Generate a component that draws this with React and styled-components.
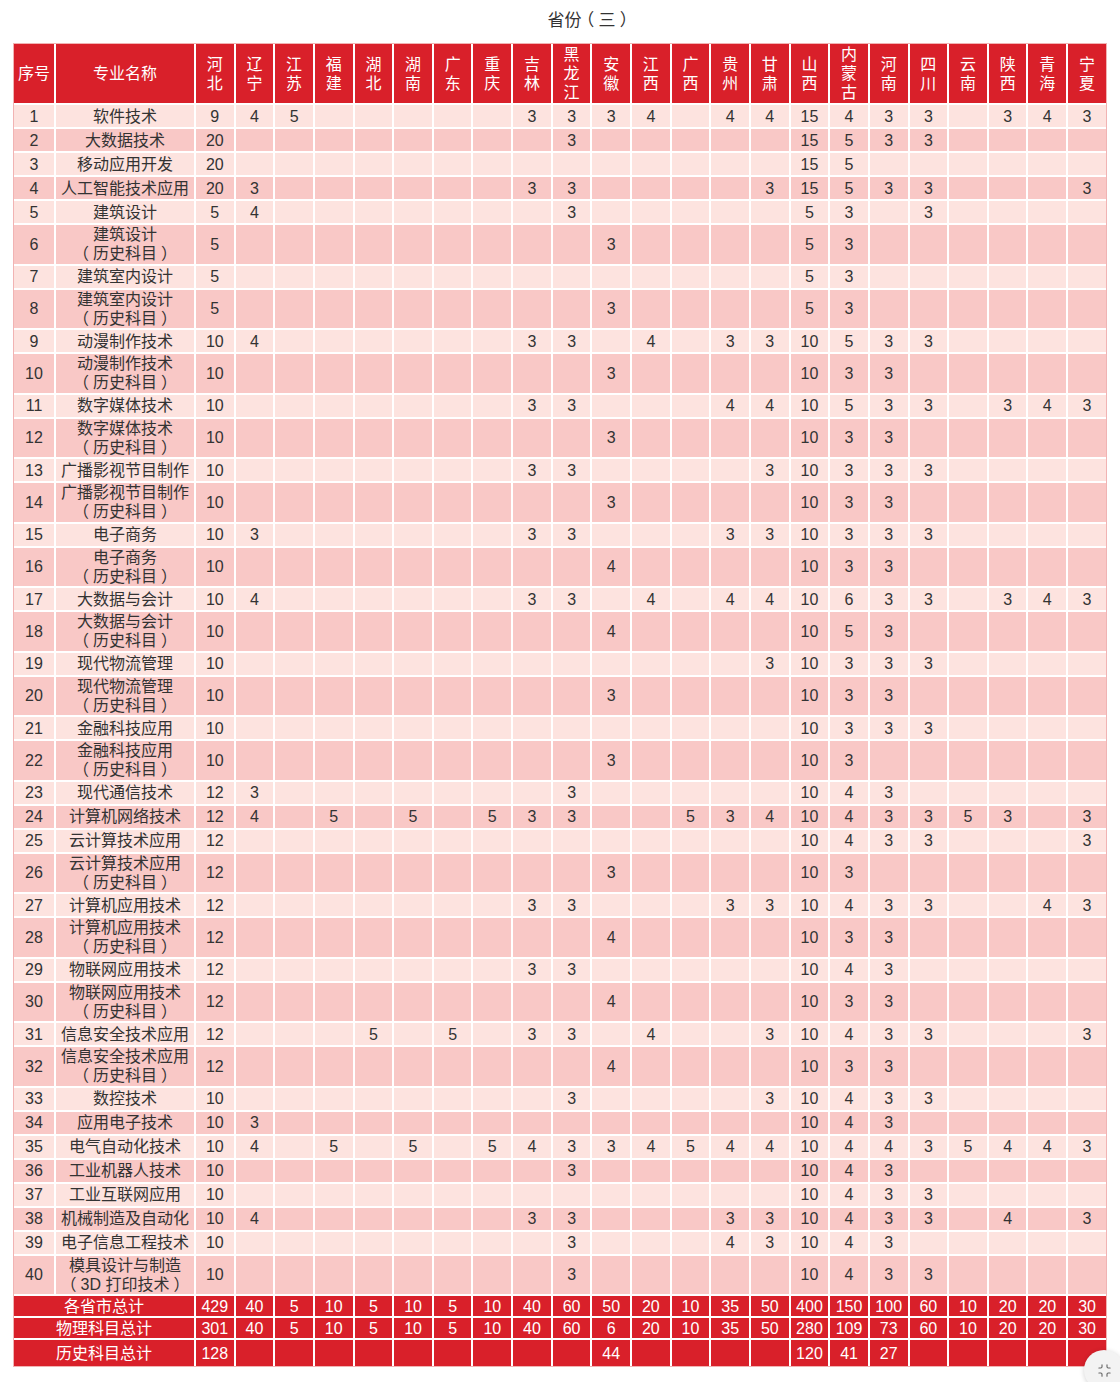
import React from "react";
import styled, { createGlobalStyle } from "styled-components";
import { Minimize } from "lucide-react";

const GlobalStyle = createGlobalStyle`
  body {
    margin: 0;
    background: #fff;
    font-family: "Liberation Sans", "Noto Sans CJK SC", sans-serif;
    color: #333;
  }
`;

const Page = styled.div`
  padding: 0 13px;
`;

const Title = styled.div`
  padding: 9px 0 0 60px;
  height: 43px;
  box-sizing: border-box;
  line-height: 24px;
  text-align: center;
  font-size: 17px;
  color: #333;
`;

const Paren = styled.span`
  display: inline-block;
  width: 1em;
  height: 1em;
  line-height: 1em;
  text-align: center;
  font-feature-settings: "halt" 1;
`;

const Table = styled.table`
  width: 100%;
  table-layout: fixed;
  border-collapse: separate;
  border-spacing: 0;
  border: 1px solid #f1b3b3;
  font-size: 16px;

  td, th {
    padding: 0;
    text-align: center;
    vertical-align: middle;
    border-left: 2px solid #fff;
    border-top: 2px solid #fff;
  }
  td:first-child, th:first-child {
    border-left: none;
  }
  thead tr:first-child th {
    border-top: none;
  }
`;

const HeadRow = styled.tr`
  height: 59px;
  background: #d9202a;
  color: #fff;

  th {
    font-weight: normal;
    line-height: 19px;
  }
`;

const HeadChar = styled.span`
  display: block;
`;

const BodyRow = styled.tr`
  height: ${(p) => (p.$double ? "40.5px" : "24px")};
  background: ${(p) => (p.$odd ? "#fde3df" : "#f9c8c6")};
  color: #333;
  line-height: 19px;
`;

const NameLine = styled.span`
  display: block;
  height: 19px;
  white-space: nowrap;
`;

const TotalRow = styled.tr`
  height: ${(p) => p.$h}px;
  background: #d9202a;
  color: #fff;
  line-height: 19px;
`;

const FloatButton = styled.button`
  position: fixed;
  right: -4px;
  bottom: -8px;
  width: 40px;
  height: 40px;
  border-radius: 50%;
  border: none;
  background: #f3f3f3;
  box-shadow: 0 1px 5px rgba(0, 0, 0, 0.18);
  display: flex;
  align-items: center;
  justify-content: center;
  color: #666;
  padding: 0;
`;

const Bracketed = ({ children }) => (
  <>
    <Paren>（</Paren>
    {children}
    <Paren>）</Paren>
  </>
);

const provinces = [
  "河北", "辽宁", "江苏", "福建", "湖北", "湖南", "广东", "重庆", "吉林",
  "黑龙江", "安徽", "江西", "广西", "贵州", "甘肃", "山西", "内蒙古",
  "河南", "四川", "云南", "陕西", "青海", "宁夏",
];

const H = "历史科目";

const rows = [
  ["软件技术", null, { 河北: 9, 辽宁: 4, 江苏: 5, 吉林: 3, 黑龙江: 3, 安徽: 3, 江西: 4, 贵州: 4, 甘肃: 4, 山西: 15, 内蒙古: 4, 河南: 3, 四川: 3, 陕西: 3, 青海: 4, 宁夏: 3 }],
  ["大数据技术", null, { 河北: 20, 黑龙江: 3, 山西: 15, 内蒙古: 5, 河南: 3, 四川: 3 }],
  ["移动应用开发", null, { 河北: 20, 山西: 15, 内蒙古: 5 }],
  ["人工智能技术应用", null, { 河北: 20, 辽宁: 3, 吉林: 3, 黑龙江: 3, 甘肃: 3, 山西: 15, 内蒙古: 5, 河南: 3, 四川: 3, 宁夏: 3 }],
  ["建筑设计", null, { 河北: 5, 辽宁: 4, 黑龙江: 3, 山西: 5, 内蒙古: 3, 四川: 3 }],
  ["建筑设计", H, { 河北: 5, 安徽: 3, 山西: 5, 内蒙古: 3 }],
  ["建筑室内设计", null, { 河北: 5, 山西: 5, 内蒙古: 3 }],
  ["建筑室内设计", H, { 河北: 5, 安徽: 3, 山西: 5, 内蒙古: 3 }],
  ["动漫制作技术", null, { 河北: 10, 辽宁: 4, 吉林: 3, 黑龙江: 3, 江西: 4, 贵州: 3, 甘肃: 3, 山西: 10, 内蒙古: 5, 河南: 3, 四川: 3 }],
  ["动漫制作技术", H, { 河北: 10, 安徽: 3, 山西: 10, 内蒙古: 3, 河南: 3 }],
  ["数字媒体技术", null, { 河北: 10, 吉林: 3, 黑龙江: 3, 贵州: 4, 甘肃: 4, 山西: 10, 内蒙古: 5, 河南: 3, 四川: 3, 陕西: 3, 青海: 4, 宁夏: 3 }],
  ["数字媒体技术", H, { 河北: 10, 安徽: 3, 山西: 10, 内蒙古: 3, 河南: 3 }],
  ["广播影视节目制作", null, { 河北: 10, 吉林: 3, 黑龙江: 3, 甘肃: 3, 山西: 10, 内蒙古: 3, 河南: 3, 四川: 3 }],
  ["广播影视节目制作", H, { 河北: 10, 安徽: 3, 山西: 10, 内蒙古: 3, 河南: 3 }],
  ["电子商务", null, { 河北: 10, 辽宁: 3, 吉林: 3, 黑龙江: 3, 贵州: 3, 甘肃: 3, 山西: 10, 内蒙古: 3, 河南: 3, 四川: 3 }],
  ["电子商务", H, { 河北: 10, 安徽: 4, 山西: 10, 内蒙古: 3, 河南: 3 }],
  ["大数据与会计", null, { 河北: 10, 辽宁: 4, 吉林: 3, 黑龙江: 3, 江西: 4, 贵州: 4, 甘肃: 4, 山西: 10, 内蒙古: 6, 河南: 3, 四川: 3, 陕西: 3, 青海: 4, 宁夏: 3 }],
  ["大数据与会计", H, { 河北: 10, 安徽: 4, 山西: 10, 内蒙古: 5, 河南: 3 }],
  ["现代物流管理", null, { 河北: 10, 甘肃: 3, 山西: 10, 内蒙古: 3, 河南: 3, 四川: 3 }],
  ["现代物流管理", H, { 河北: 10, 安徽: 3, 山西: 10, 内蒙古: 3, 河南: 3 }],
  ["金融科技应用", null, { 河北: 10, 山西: 10, 内蒙古: 3, 河南: 3, 四川: 3 }],
  ["金融科技应用", H, { 河北: 10, 安徽: 3, 山西: 10, 内蒙古: 3 }],
  ["现代通信技术", null, { 河北: 12, 辽宁: 3, 黑龙江: 3, 山西: 10, 内蒙古: 4, 河南: 3 }],
  ["计算机网络技术", null, { 河北: 12, 辽宁: 4, 福建: 5, 湖南: 5, 重庆: 5, 吉林: 3, 黑龙江: 3, 广西: 5, 贵州: 3, 甘肃: 4, 山西: 10, 内蒙古: 4, 河南: 3, 四川: 3, 云南: 5, 陕西: 3, 宁夏: 3 }],
  ["云计算技术应用", null, { 河北: 12, 山西: 10, 内蒙古: 4, 河南: 3, 四川: 3, 宁夏: 3 }],
  ["云计算技术应用", H, { 河北: 12, 安徽: 3, 山西: 10, 内蒙古: 3 }],
  ["计算机应用技术", null, { 河北: 12, 吉林: 3, 黑龙江: 3, 贵州: 3, 甘肃: 3, 山西: 10, 内蒙古: 4, 河南: 3, 四川: 3, 青海: 4, 宁夏: 3 }],
  ["计算机应用技术", H, { 河北: 12, 安徽: 4, 山西: 10, 内蒙古: 3, 河南: 3 }],
  ["物联网应用技术", null, { 河北: 12, 吉林: 3, 黑龙江: 3, 山西: 10, 内蒙古: 4, 河南: 3 }],
  ["物联网应用技术", H, { 河北: 12, 安徽: 4, 山西: 10, 内蒙古: 3, 河南: 3 }],
  ["信息安全技术应用", null, { 河北: 12, 湖北: 5, 广东: 5, 吉林: 3, 黑龙江: 3, 江西: 4, 甘肃: 3, 山西: 10, 内蒙古: 4, 河南: 3, 四川: 3, 宁夏: 3 }],
  ["信息安全技术应用", H, { 河北: 12, 安徽: 4, 山西: 10, 内蒙古: 3, 河南: 3 }],
  ["数控技术", null, { 河北: 10, 黑龙江: 3, 甘肃: 3, 山西: 10, 内蒙古: 4, 河南: 3, 四川: 3 }],
  ["应用电子技术", null, { 河北: 10, 辽宁: 3, 山西: 10, 内蒙古: 4, 河南: 3 }],
  ["电气自动化技术", null, { 河北: 10, 辽宁: 4, 福建: 5, 湖南: 5, 重庆: 5, 吉林: 4, 黑龙江: 3, 安徽: 3, 江西: 4, 广西: 5, 贵州: 4, 甘肃: 4, 山西: 10, 内蒙古: 4, 河南: 4, 四川: 3, 云南: 5, 陕西: 4, 青海: 4, 宁夏: 3 }],
  ["工业机器人技术", null, { 河北: 10, 黑龙江: 3, 山西: 10, 内蒙古: 4, 河南: 3 }],
  ["工业互联网应用", null, { 河北: 10, 山西: 10, 内蒙古: 4, 河南: 3, 四川: 3 }],
  ["机械制造及自动化", null, { 河北: 10, 辽宁: 4, 吉林: 3, 黑龙江: 3, 贵州: 3, 甘肃: 3, 山西: 10, 内蒙古: 4, 河南: 3, 四川: 3, 陕西: 4, 宁夏: 3 }],
  ["电子信息工程技术", null, { 河北: 10, 黑龙江: 3, 贵州: 4, 甘肃: 3, 山西: 10, 内蒙古: 4, 河南: 3 }],
  ["模具设计与制造", "3D 打印技术", { 河北: 10, 黑龙江: 3, 山西: 10, 内蒙古: 4, 河南: 3, 四川: 3 }],
];

const totals = [
  ["各省市总计", 22, [429, 40, 5, 10, 5, 10, 5, 10, 40, 60, 50, 20, 10, 35, 50, 400, 150, 100, 60, 10, 20, 20, 30]],
  ["物理科目总计", 22, [301, 40, 5, 10, 5, 10, 5, 10, 40, 60, 6, 20, 10, 35, 50, 280, 109, 73, 60, 10, 20, 20, 30]],
  ["历史科目总计", 28, [128, "", "", "", "", "", "", "", "", "", 44, "", "", "", "", 120, 41, 27, "", "", "", "", ""]],
];

export default function App() {
  return (
    <Page>
      <GlobalStyle />
      <Title>
        省份<Bracketed>三</Bracketed>
      </Title>
      <Table>
        <colgroup>
          <col style={{ width: 40 }} />
          <col style={{ width: 140 }} />
          {provinces.map((p) => (
            <col key={p} />
          ))}
        </colgroup>
        <thead>
          <HeadRow>
            <th>序号</th>
            <th>专业名称</th>
            {provinces.map((p) => (
              <th key={p}>
                {p.split("").map((c, i) => (
                  <HeadChar key={i}>{c}</HeadChar>
                ))}
              </th>
            ))}
          </HeadRow>
        </thead>
        <tbody>
          {rows.map(([name, sub, vals], i) => (
            <BodyRow key={i} $odd={i % 2 === 0} $double={!!sub}>
              <td>{i + 1}</td>
              <td>
                <NameLine>{name}</NameLine>
                {sub && (
                  <NameLine>
                    <Bracketed>{sub}</Bracketed>
                  </NameLine>
                )}
              </td>
              {provinces.map((p) => (
                <td key={p}>{vals[p] ?? ""}</td>
              ))}
            </BodyRow>
          ))}
          {totals.map(([label, h, vals]) => (
            <TotalRow key={label} $h={h}>
              <td colSpan={2}>{label}</td>
              {vals.map((v, j) => (
                <td key={j}>{v}</td>
              ))}
            </TotalRow>
          ))}
        </tbody>
      </Table>
      <FloatButton aria-label="收起">
        <Minimize size={15} strokeWidth={1.8} />
      </FloatButton>
    </Page>
  );
}
